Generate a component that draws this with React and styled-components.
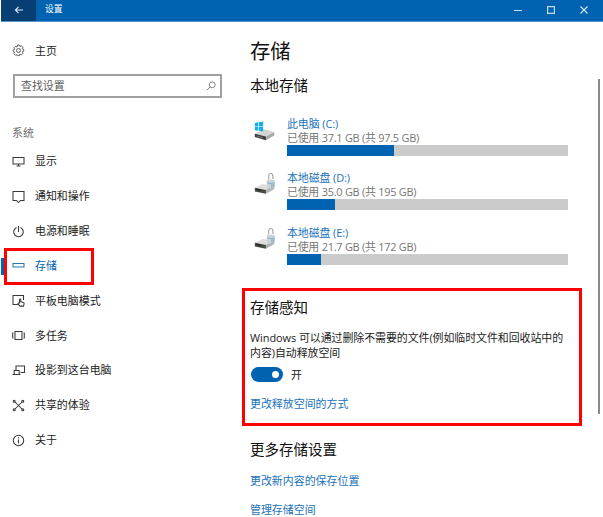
import React from 'react';
import styled, { createGlobalStyle } from 'styled-components';

const Global = createGlobalStyle`
  * { box-sizing: border-box; }
  body { margin: 0; background: #fff; overflow: hidden; }
`;

const Window = styled.div`
  width: 603px;
  height: 517px;
  overflow: hidden;
  padding-left: 1px;
  background: #fff;
  color: #1c1c1c;
  font: 10.95px/14px 'Open Sans', 'Noto Sans CJK SC', sans-serif;
`;
const TitleBar = styled.header`
  display: flex;
  align-items: stretch;
  height: 22px;
  background: #0063b1;
  border-bottom: 1px solid #5596cd;
  color: #fff;
`;
const Back = styled.button`
  display: flex;
  align-items: center;
  justify-content: center;
  width: 35px;
  padding: 0 0 2px;
  border: 0;
  background: #083f72;
`;
const AppName = styled.span`
  flex: 1;
  padding-left: 9px;
  font-size: 8.8px;
  line-height: 19px;
`;
const Controls = styled.div`
  display: flex;
  padding-right: 2px;
`;
const Control = styled.span`
  display: flex;
  align-items: center;
  justify-content: center;
  width: 33.3px;
  padding-bottom: 1px;
`;
const Body = styled.div`
  display: grid;
  grid-template-columns: 241px 341px 1fr;
  height: 495px;
`;
const Sidebar = styled.nav`
  display: flex;
  flex-direction: column;
`;
const Home = styled.div`
  display: flex;
  align-items: center;
  height: 35px;
  margin-top: 11px;
  padding-left: 11px;
`;
const Label = styled.span`
  margin-left: 10px;
  white-space: nowrap;
`;
const Search = styled.div`
  display: flex;
  align-items: center;
  justify-content: space-between;
  width: 209px;
  height: 24px;
  margin: 6px 0 0 12px;
  padding: 0 4px 1px 6px;
  border: 2px solid #a0a0a0;
  color: #606060;
`;
const Group = styled.div`
  margin: 28px 0 4px 11px;
  color: #6e6e6e;
  height: 14px;
`;
const Item = styled.div`
  position: relative;
  display: flex;
  align-items: center;
  height: 34.85px;
  padding-left: 11px;
  color: ${(p) => (p.$active ? '#0063b1' : '#1c1c1c')};
`;
const Marker = styled.i`
  position: absolute;
  left: 0;
  top: 9px;
  width: 4px;
  height: 17px;
  background: #0063b1;
`;
const Highlight = styled.i`
  position: absolute;
  left: 3px;
  top: -0.5px;
  width: 90px;
  height: 37px;
  border: 3px solid #fe0000;
`;
const Content = styled.main`
  padding-top: 15px;
`;
const Title = styled.h1`
  margin: 0 0 0 8px;
  font-size: 20.3px;
  font-weight: 400;
  line-height: 28px;
  color: #111;
`;
const Heading = styled.h2`
  margin: ${(p) => p.$top || 0}px 0 0 8px;
  font-size: 14.5px;
  font-weight: 400;
  line-height: 20px;
  color: #111;
`;
const Drives = styled.div`
  margin: 21px 0 0 11px;
`;
const Drive = styled.div`
  display: grid;
  grid-template-columns: 34px 281px;
  height: 54.35px;
`;
const DriveIcon = styled.div`
  padding-top: ${(p) => (p.$system ? 2 : 1)}px;
  height: 30px;
`;
const DriveName = styled.div`
  color: #1a72b9;
  line-height: 14px;
  letter-spacing: -0.1px;
`;
const Usage = styled.div`
  color: #777;
  line-height: 14px;
  letter-spacing: -0.25px;
  white-space: nowrap;
`;
const Track = styled.div`
  height: 11px;
  background: #cbcbcb;
`;
const Fill = styled.div`
  width: ${(p) => p.$width}px;
  height: 100%;
  background: #0063b1;
`;
const Sense = styled.section`
  width: 340px;
  height: 138px;
  margin-top: 8px;
  padding: 7px 0 0 5px;
  border: 3px solid #fe0000;
  & > h2 { margin-left: 0; }
`;
const Paragraph = styled.p`
  margin: 13px 0 0;
  line-height: 14.6px;
  letter-spacing: -0.06px;
  white-space: nowrap;
`;
const SwitchRow = styled.div`
  display: flex;
  align-items: center;
  height: 15px;
  margin-top: 7px;
`;
const Toggle = styled.span`
  display: flex;
  align-items: center;
  justify-content: flex-end;
  width: 32px;
  height: 15px;
  margin: 0 -2px 0 1px;
  padding-right: 4px;
  border-radius: 8px;
  background: #0063b1;
`;
const Knob = styled.i`
  width: 7px;
  height: 7px;
  border-radius: 50%;
  background: #fff;
`;
const Link = styled.div`
  margin: ${(p) => p.$top}px 0 0 ${(p) => p.$left || 0}px;
  line-height: 14px;
  color: #1a72b9;
`;
const Scroll = styled.div`
  width: 2px;
  height: 335px;
  margin: 57px 0 0 15px;
  background: #8a8a8a;
`;
const Glyph = styled.svg`
  display: block;
  flex: none;
  fill: none;
  stroke: ${(p) => p.$color || 'currentColor'};
  stroke-width: ${(p) => p.$weight || 1};
`;

const icons = {
  display: <><path d="M1 2.500h11v6.500H1zM4.500 11h4" /><path d="M6.500 9v2" /></>,
  notice: <path d="M1 1.500h11v9H8.500l-2 2-2-2H1z" />,
  power: <><path d="M4.500 2.500a4.800 4.800 0 1 0 4 0M6.500 1v6" /></>,
  storage: <path d="M1 4.500h11v3.500H1z" />,
  tablet: <><path d="M6 10.500H1v-9h10.500V6" /><path d="M7.500 9V5.800c0-1 1.300-1 1.300 0v2l2.700.6c.7.2.7.7.6 1.400l-.6 2.300H8L6 9.800c.2-.8.8-.9 1.500-.3" /></>,
  tasks: <><path d="M3 2.500h7v8H3zM1.500 4H.7v5h.8M11.500 4h.8v5h-.8" /></>,
  project: <><path d="M4 6V2h8.500v6.500H8.500" /><path d="M2.200 6.500h5v4h-5zM.5 10.500h8" /></>,
  share: <><path d="M3 3l7 7M10 3l-7 7" /><circle cx="2.200" cy="2.300" r="1" /><circle cx="10.800" cy="2.300" r="1" /><circle cx="2.200" cy="10.700" r="1" /><circle cx="10.800" cy="10.700" r="1" /></>,
  about: <><circle cx="6.500" cy="6.500" r="5.200" /><path d="M6.500 5.500v4M6.500 3.300v1.200" /></>,
  gear: <><path d="M5.500 1h2l.4 1.500 1.500-.7 1.500 1.500-.7 1.400 1.500.6v2l-1.500.5.7 1.500-1.500 1.500-1.500-.7-.4 1.500h-2L5 10.600l-1.500.7L2 9.800l.7-1.500L1.200 7.800v-2l1.500-.6L2 3.800l1.500-1.500 1.500.7z" /><circle cx="6.500" cy="6.500" r="2" /></>,
};

const Icon = ({ name }) => (
  <Glyph
    width="13"
    height="13"
    viewBox="0 0 13 13"
    $weight={name === 'gear' ? 0.8 : 1.05}
    $color={name === 'storage' ? '#2878ba' : '#3a3a3a'}
  >
    {icons[name]}
  </Glyph>
);

const items = [
  ['display', '显示'],
  ['notice', '通知和操作'],
  ['power', '电源和睡眠'],
  ['storage', '存储'],
  ['tablet', '平板电脑模式'],
  ['tasks', '多任务'],
  ['project', '投影到这台电脑'],
  ['share', '共享的体验'],
  ['about', '关于'],
];

const drives = [
  { name: '此电脑 (C:)', usage: '已使用 37.1 GB (共 97.5 GB)', fill: 107, system: true },
  { name: '本地磁盘 (D:)', usage: '已使用 35.0 GB (共 195 GB)', fill: 48 },
  { name: '本地磁盘 (E:)', usage: '已使用 21.7 GB (共 172 GB)', fill: 34 },
];

const SystemDrive = () => (
  <Glyph width="24" height="24" viewBox="0 0 26 26" $color="none">
    <path d="M2 16l10-5 11 3-9 5z" fill="#d5d5d5" />
    <path d="M2 16l12 3v4L2 19.500z" fill="#3b3b3b" />
    <path d="M14 19l9-5v4l-9 5z" fill="#a9a9a9" />
    <path d="M4 18l7 1.800v1L4 19z" fill="#777" />
    <path d="M2 4.200l3.500-.6v4.200H2zM6.200 3.500l4.800-.8v5.100H6.200zM2 8.500h3.500v4.200L2 12.200zM6.200 8.500H11v5l-4.800-.7z" fill="#18aeea" />
  </Glyph>
);

const LockedDrive = () => (
  <Glyph width="24" height="24" viewBox="0 0 26 26" $color="none">
    <path d="M2 17l8-4 13 2-9 5z" fill="#dedede" />
    <path d="M2 17l12 2.500v4L2 21z" fill="#454b43" />
    <path d="M14 19.500l9-5v4l-9 5z" fill="#b0b4b6" />
    <path d="M3.500 18l5 1.300v1.200l-5-1.300z" fill="#1e251d" />
    <path d="M17 8V4.500c0-3.800 4.500-3.800 4.500 0v3" fill="none" stroke="#a5abae" strokeWidth="1.300" />
    <path d="M15 9l4.500-1 4 1v7l-4 2-4.500-1z" fill="#cdd4d8" />
    <path d="M15 11l4.500 1 4-1v1.300l-4 1-4.500-1z" fill="#8ab6d1" />
    <path d="M19.500 13l4-1v4l-4 2z" fill="#a9b8c2" />
  </Glyph>
);

export default function App() {
  return (
    <Window>
      <Global />
      <TitleBar>
        <Back aria-label="返回">
          <Glyph width="10" height="8" viewBox="0 0 11 9" $color="#e4edf5" $weight={1.2}><path d="M10 4.500H1.500M5 1L1.500 4.500 5 8" /></Glyph>
        </Back>
        <AppName>设置</AppName>
        <Controls>
          <Control><Glyph width="8" height="8" $color="#c5dcf0"><path d="M0 4.500h8" /></Glyph></Control>
          <Control><Glyph width="8" height="8" $color="#c5dcf0" $weight={1.2}><path d="M.6.6h6.800v6.800H.6z" /></Glyph></Control>
          <Control><Glyph width="8" height="8" $color="#d5e5f3" $weight={1.1}><path d="M.5.5l7 7M7.500.5l-7 7" /></Glyph></Control>
        </Controls>
      </TitleBar>
      <Body>
        <Sidebar>
          <Home><Icon name="gear" /><Label>主页</Label></Home>
          <Search>
            <span>查找设置</span>
            <Glyph width="10" height="10" $color="#777" $weight={0.9}><circle cx="6.200" cy="3.800" r="2.900" /><path d="M4 6L.7 9.300" /></Glyph>
          </Search>
          <Group>系统</Group>
          {items.map(([name, text]) => (
            <Item key={name} $active={name === 'storage'}>
              {name === 'storage' && <><Marker /><Highlight /></>}
              <Icon name={name} />
              <Label>{text}</Label>
            </Item>
          ))}
        </Sidebar>
        <Content>
          <Title>存储</Title>
          <Heading $top={11}>本地存储</Heading>
          <Drives>
            {drives.map((d) => (
              <Drive key={d.name}>
                <DriveIcon $system={d.system}>{d.system ? <SystemDrive /> : <LockedDrive />}</DriveIcon>
                <div>
                  <DriveName>{d.name}</DriveName>
                  <Usage>{d.usage}</Usage>
                  <Track><Fill $width={d.fill} /></Track>
                </div>
              </Drive>
            ))}
          </Drives>
          <Sense>
            <Heading>存储感知</Heading>
            <Paragraph>Windows 可以通过删除不需要的文件(例如临时文件和回收站中的<br />内容)自动释放空间</Paragraph>
            <SwitchRow><Toggle><Knob /></Toggle><Label>开</Label></SwitchRow>
            <Link $top={15}>更改释放空间的方式</Link>
          </Sense>
          <Heading $top={14}>更多存储设置</Heading>
          <Link $top={14} $left={8}>更改新内容的保存位置</Link>
          <Link $top={15} $left={8}>管理存储空间</Link>
        </Content>
        <Scroll />
      </Body>
    </Window>
  );
}
